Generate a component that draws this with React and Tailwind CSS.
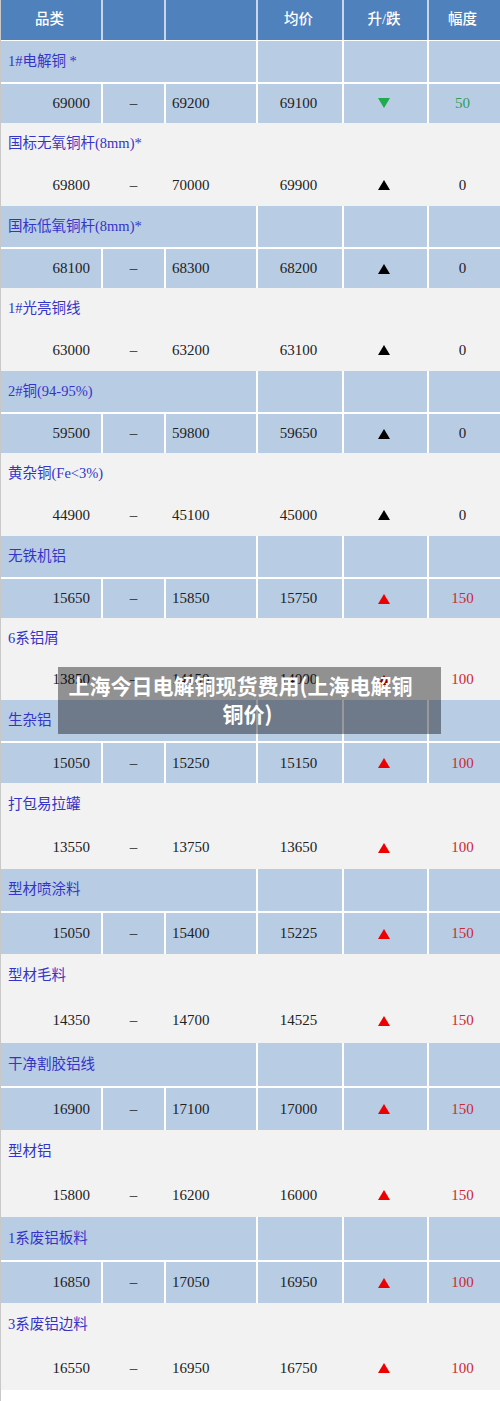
import React from "react";

const rows = [
  { name: "1#电解铜 *", low: "69000", high: "69200", avg: "69100", dir: "down", change: "50", h: 82 },
  { name: "国标无氧铜杆(8mm)*", low: "69800", high: "70000", avg: "69900", dir: "flat", change: "0", h: 83 },
  { name: "国标低氧铜杆(8mm)*", low: "68100", high: "68300", avg: "68200", dir: "flat", change: "0", h: 82 },
  { name: "1#光亮铜线", low: "63000", high: "63200", avg: "63100", dir: "flat", change: "0", h: 83 },
  { name: "2#铜(94-95%)", low: "59500", high: "59800", avg: "59650", dir: "flat", change: "0", h: 82 },
  { name: "黄杂铜(Fe<3%)", low: "44900", high: "45100", avg: "45000", dir: "flat", change: "0", h: 83 },
  { name: "无铁机铝", low: "15650", high: "15850", avg: "15750", dir: "up", change: "150", h: 82 },
  { name: "6系铝屑", low: "13850", high: "14150", avg: "14000", dir: "up", change: "100", h: 82 },
  { name: "生杂铝", low: "15050", high: "15250", avg: "15150", dir: "up", change: "100", h: 83 },
  { name: "打包易拉罐", low: "13550", high: "13750", avg: "13650", dir: "up", change: "100", h: 86 },
  { name: "型材喷涂料", low: "15050", high: "15400", avg: "15225", dir: "up", change: "150", h: 85 },
  { name: "型材毛料", low: "14350", high: "14700", avg: "14525", dir: "up", change: "150", h: 89 },
  { name: "干净割胶铝线", low: "16900", high: "17100", avg: "17000", dir: "up", change: "150", h: 87 },
  { name: "型材铝", low: "15800", high: "16200", avg: "16000", dir: "up", change: "150", h: 87 },
  { name: "1系废铝板料", low: "16850", high: "17050", avg: "16950", dir: "up", change: "100", h: 86 },
  { name: "3系废铝边料", low: "16550", high: "16950", avg: "16750", dir: "up", change: "100", h: 87 },
];

const font = { fontFamily: '"Liberation Serif", "Noto Sans CJK SC", serif' };

const Arrow = ({ dir }) => {
  if (dir === "down") {
    return (
      <svg width="12" height="10" viewBox="0 0 12 10" className="-mt-[2px]">
        <polygon points="0,0 12,0 6,10" fill="#1faa4f" />
      </svg>
    );
  }
  return (
    <svg width="12" height="10" viewBox="0 0 12 10">
      <polygon points="6,0 12,10 0,10" fill={dir === "up" ? "#ee0000" : "#000000"} />
    </svg>
  );
};

const changeColor = (dir) =>
  dir === "down" ? "text-[#2e9e5b]" : dir === "up" ? "text-[#cc2836]" : "text-[#222]";

const cols = "grid grid-cols-[100px_61px_90px_84px_83px_1fr] gap-x-[2px]";

const Group = ({ row, blue }) => {
  const nameH = Math.floor(row.h / 2);
  const valH = row.h - nameH - (blue ? 2 : 0);
  const cell = blue ? "bg-[#b8cce4]" : "bg-[#f2f2f2]";
  return (
    <div className={blue ? "bg-white flex flex-col gap-y-[2px]" : "bg-[#f2f2f2] flex flex-col"}>
      <div className={cols} style={{ height: nameH }}>
        <div className={`${cell} col-span-3 flex items-center pl-[7px] text-[14.5px] text-[#3434c8]`}>
          {row.name}
        </div>
        <div className={cell} />
        <div className={cell} />
        <div className={cell} />
      </div>
      <div className={`${cols} text-[15px] text-[#222]`} style={{ height: valH }}>
        <div className={`${cell} flex items-center justify-end pr-[11px]`}>{row.low}</div>
        <div className={`${cell} flex items-center justify-center`}>–</div>
        <div className={`${cell} flex items-center pl-[6px]`}>{row.high}</div>
        <div className={`${cell} flex items-center justify-center pr-[3px]`}>{row.avg}</div>
        <div className={`${cell} flex items-center justify-center pr-[3px]`}>
          <Arrow dir={row.dir} />
        </div>
        <div className={`${cell} flex items-center justify-center pr-[4px] ${changeColor(row.dir)}`}>
          {row.change}
        </div>
      </div>
    </div>
  );
};

export default function App() {
  return (
    <div className="relative w-[500px] h-[1401px] bg-white border-l border-[#c8c8c8]" style={font}>
      <div className="bg-white flex flex-col gap-y-[1px]">
        <div className={`${cols} h-[40px] bg-[#c9d6ea] text-white text-[14.5px] font-medium`}>
          <div className="bg-[#4f81bd] flex items-center justify-center pr-[3px]">品类</div>
          <div className="bg-[#4f81bd]" />
          <div className="bg-[#4f81bd]" />
          <div className="bg-[#4f81bd] flex items-center justify-center pr-[3px]">均价</div>
          <div className="bg-[#4f81bd] flex items-center justify-center pr-[3px]">升/跌</div>
          <div className="bg-[#4f81bd] flex items-center justify-center pr-[4px]">幅度</div>
        </div>
        <div className="flex flex-col">
          {rows.map((row, i) => (
            <Group key={i} row={row} blue={i % 2 === 0} />
          ))}
        </div>
      </div>

      <div
        className="absolute left-[57px] top-[667px] w-[383px] h-[67px] bg-black/40 pt-[4px] text-center text-white text-[21px] font-bold leading-[28px]"
        style={{ fontFamily: '"Noto Sans CJK SC", sans-serif' }}
      >
        <div className="whitespace-nowrap pr-[18px]">上海今日电解铜现货费用(上海电解铜</div>
        <div className="whitespace-nowrap pr-[4px]">铜价)</div>
      </div>
    </div>
  );
}
